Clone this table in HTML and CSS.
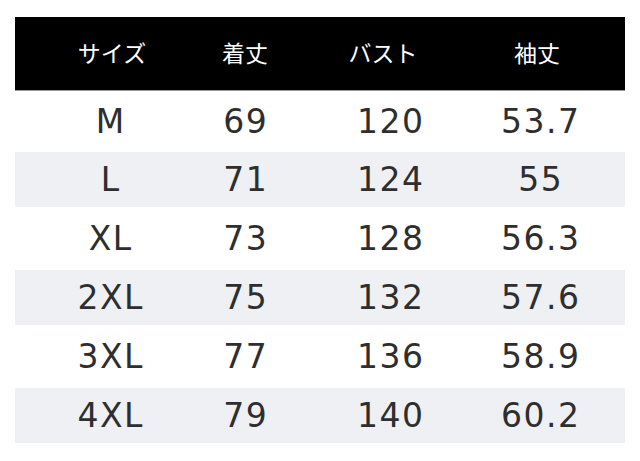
FILE: index.html
```html
<!DOCTYPE html>
<html lang="ja">
<head>
<meta charset="utf-8">
<link rel="stylesheet" href="styles.css">
</head>
<body>
<div class="wrap">
  <div class="table">
    <div class="row head">
      <div class="cell">サイズ</div>
      <div class="cell">着丈</div>
      <div class="cell">バスト</div>
      <div class="cell">袖丈</div>
    </div>
    <div class="row white first">
      <div class="cell">M</div><div class="cell">69</div><div class="cell">120</div><div class="cell">53.7</div>
    </div>
    <div class="row gray">
      <div class="cell">L</div><div class="cell">71</div><div class="cell">124</div><div class="cell">55</div>
    </div>
    <div class="row white">
      <div class="cell">XL</div><div class="cell">73</div><div class="cell">128</div><div class="cell">56.3</div>
    </div>
    <div class="row gray">
      <div class="cell">2XL</div><div class="cell">75</div><div class="cell">132</div><div class="cell">57.6</div>
    </div>
    <div class="row white">
      <div class="cell">3XL</div><div class="cell">77</div><div class="cell">136</div><div class="cell">58.9</div>
    </div>
    <div class="row gray">
      <div class="cell">4XL</div><div class="cell">79</div><div class="cell">140</div><div class="cell">60.2</div>
    </div>
  </div>
</div>
</body>
</html>
```

FILE: styles.css
```css
html, body {
  margin: 0;
  padding: 0;
  background: #ffffff;
}
.wrap {
  padding: 17px 15px 0 15px;
}
.table {
  width: 610px;
  display: flex;
  flex-direction: column;
}
.row {
  display: grid;
  grid-template-columns: 190px 80px 210px 90px 1fr;
  align-items: center;
}
.cell {
  text-align: center;
  white-space: nowrap;
}
.head {
  height: 74px;
  box-sizing: border-box;
  padding-bottom: 3px;
  background: #000000;
  border-bottom: 1px solid #9a9a9a;
  color: #ffffff;
  font-family: "Noto Sans CJK JP", "Noto Sans", sans-serif;
  font-size: 23px;
}
.head .cell:nth-child(1) {
  padding-left: 4px;
}
.head .cell:nth-child(3) {
  padding-right: 14px;
}
.head .cell:nth-child(4) {
  padding-right: 6px;
}
.white, .gray {
  font-family: "DejaVu Sans", "Liberation Sans", sans-serif;
  font-size: 33px;
  letter-spacing: 1.5px;
  color: #2e2e2e;
}
.white .cell, .gray .cell {
  padding-left: 1.5px;
}
.white {
  height: 63px;
  background: #ffffff;
}
.white.first {
  height: 61px;
}
.gray {
  height: 55px;
  background: #eff0f4;
}
```
